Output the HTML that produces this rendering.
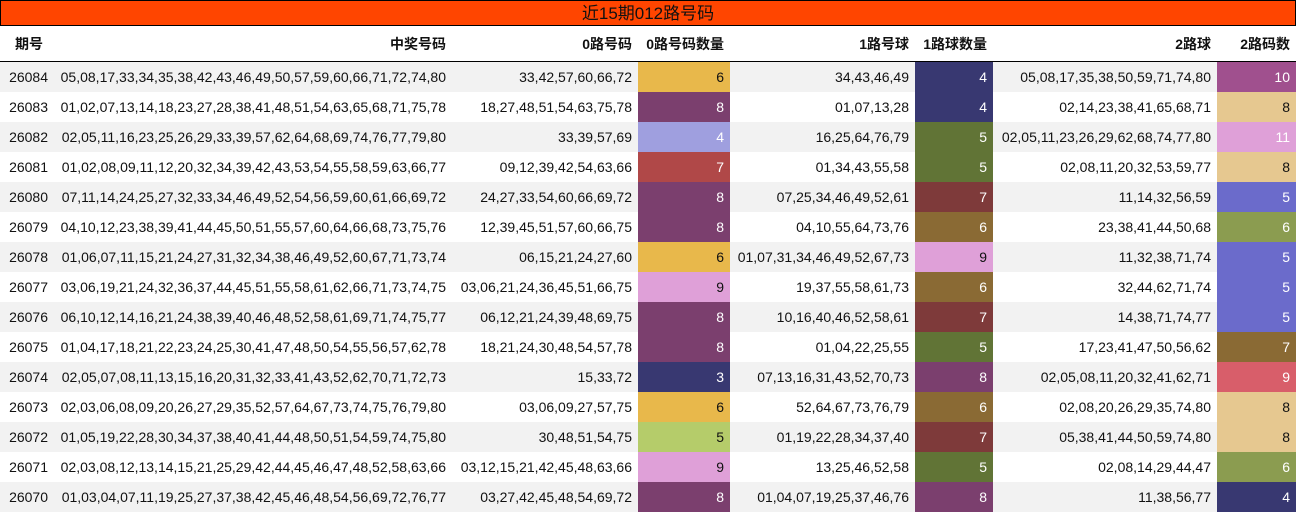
<!DOCTYPE html><html><head><meta charset="utf-8"><style>
body{margin:0;background:#fff;font-family:"Liberation Sans","Noto Sans CJK SC",sans-serif;font-size:14px;color:#111}
.t{position:absolute;left:0;top:0;width:1294px;height:24px;background:#FF4500;border:1px solid #000;text-align:center;font-size:17px;line-height:26px;color:#111}
table{position:absolute;top:26px;left:0;border-collapse:collapse;table-layout:fixed;width:1296px}
th{height:35px;font-weight:bold;text-align:right;padding:0 6px;border-bottom:1px solid #000;white-space:nowrap}
td{height:30px;padding:0 6px;text-align:right;white-space:nowrap}
tr.o td{background:#f2f2f2}
td.c{color:#fff}td.k{color:#111}
</style></head><body>
<div class="t">近15期012路号码</div>
<table>
<colgroup><col style="width:54px"><col style="width:398px"><col style="width:186px"><col style="width:92px"><col style="width:185px"><col style="width:78px"><col style="width:224px"><col style="width:79px"></colgroup>
<tr><th style="text-align:center;padding:0 0 0 4px">期号</th><th>中奖号码</th><th>0路号码</th><th>0路号码数量</th><th>1路号球</th><th>1路球数量</th><th>2路球</th><th>2路码数</th></tr>
<tr class="o"><td>26084</td><td>05,08,17,33,34,35,38,42,43,46,49,50,57,59,60,66,71,72,74,80</td><td>33,42,57,60,66,72</td><td class="k" style="background:#E8B84B!important">6</td><td>34,43,46,49</td><td class="c" style="background:#383871!important">4</td><td>05,08,17,35,38,50,59,71,74,80</td><td class="c" style="background:#A0508E!important">10</td></tr>
<tr><td>26083</td><td>01,02,07,13,14,18,23,27,28,38,41,48,51,54,63,65,68,71,75,78</td><td>18,27,48,51,54,63,75,78</td><td class="c" style="background:#7B3F6E">8</td><td>01,07,13,28</td><td class="c" style="background:#383871">4</td><td>02,14,23,38,41,65,68,71</td><td class="k" style="background:#E6C890">8</td></tr>
<tr class="o"><td>26082</td><td>02,05,11,16,23,25,26,29,33,39,57,62,64,68,69,74,76,77,79,80</td><td>33,39,57,69</td><td class="c" style="background:#9F9FDF!important">4</td><td>16,25,64,76,79</td><td class="c" style="background:#617436!important">5</td><td>02,05,11,23,26,29,62,68,74,77,80</td><td class="c" style="background:#DFA0D8!important">11</td></tr>
<tr><td>26081</td><td>01,02,08,09,11,12,20,32,34,39,42,43,53,54,55,58,59,63,66,77</td><td>09,12,39,42,54,63,66</td><td class="c" style="background:#B04848">7</td><td>01,34,43,55,58</td><td class="c" style="background:#617436">5</td><td>02,08,11,20,32,53,59,77</td><td class="k" style="background:#E6C890">8</td></tr>
<tr class="o"><td>26080</td><td>07,11,14,24,25,27,32,33,34,46,49,52,54,56,59,60,61,66,69,72</td><td>24,27,33,54,60,66,69,72</td><td class="c" style="background:#7B3F6E!important">8</td><td>07,25,34,46,49,52,61</td><td class="c" style="background:#7E3A3A!important">7</td><td>11,14,32,56,59</td><td class="c" style="background:#6B6BCB!important">5</td></tr>
<tr><td>26079</td><td>04,10,12,23,38,39,41,44,45,50,51,55,57,60,64,66,68,73,75,76</td><td>12,39,45,51,57,60,66,75</td><td class="c" style="background:#7B3F6E">8</td><td>04,10,55,64,73,76</td><td class="c" style="background:#8A6A34">6</td><td>23,38,41,44,50,68</td><td class="c" style="background:#8B9C50">6</td></tr>
<tr class="o"><td>26078</td><td>01,06,07,11,15,21,24,27,31,32,34,38,46,49,52,60,67,71,73,74</td><td>06,15,21,24,27,60</td><td class="k" style="background:#E8B84B!important">6</td><td>01,07,31,34,46,49,52,67,73</td><td class="k" style="background:#DFA0D8!important">9</td><td>11,32,38,71,74</td><td class="c" style="background:#6B6BCB!important">5</td></tr>
<tr><td>26077</td><td>03,06,19,21,24,32,36,37,44,45,51,55,58,61,62,66,71,73,74,75</td><td>03,06,21,24,36,45,51,66,75</td><td class="k" style="background:#DFA0D8">9</td><td>19,37,55,58,61,73</td><td class="c" style="background:#8A6A34">6</td><td>32,44,62,71,74</td><td class="c" style="background:#6B6BCB">5</td></tr>
<tr class="o"><td>26076</td><td>06,10,12,14,16,21,24,38,39,40,46,48,52,58,61,69,71,74,75,77</td><td>06,12,21,24,39,48,69,75</td><td class="c" style="background:#7B3F6E!important">8</td><td>10,16,40,46,52,58,61</td><td class="c" style="background:#7E3A3A!important">7</td><td>14,38,71,74,77</td><td class="c" style="background:#6B6BCB!important">5</td></tr>
<tr><td>26075</td><td>01,04,17,18,21,22,23,24,25,30,41,47,48,50,54,55,56,57,62,78</td><td>18,21,24,30,48,54,57,78</td><td class="c" style="background:#7B3F6E">8</td><td>01,04,22,25,55</td><td class="c" style="background:#617436">5</td><td>17,23,41,47,50,56,62</td><td class="c" style="background:#8A6A34">7</td></tr>
<tr class="o"><td>26074</td><td>02,05,07,08,11,13,15,16,20,31,32,33,41,43,52,62,70,71,72,73</td><td>15,33,72</td><td class="c" style="background:#383871!important">3</td><td>07,13,16,31,43,52,70,73</td><td class="c" style="background:#7B3F6E!important">8</td><td>02,05,08,11,20,32,41,62,71</td><td class="c" style="background:#D85E6A!important">9</td></tr>
<tr><td>26073</td><td>02,03,06,08,09,20,26,27,29,35,52,57,64,67,73,74,75,76,79,80</td><td>03,06,09,27,57,75</td><td class="k" style="background:#E8B84B">6</td><td>52,64,67,73,76,79</td><td class="c" style="background:#8A6A34">6</td><td>02,08,20,26,29,35,74,80</td><td class="k" style="background:#E6C890">8</td></tr>
<tr class="o"><td>26072</td><td>01,05,19,22,28,30,34,37,38,40,41,44,48,50,51,54,59,74,75,80</td><td>30,48,51,54,75</td><td class="k" style="background:#B5CC6A!important">5</td><td>01,19,22,28,34,37,40</td><td class="c" style="background:#7E3A3A!important">7</td><td>05,38,41,44,50,59,74,80</td><td class="k" style="background:#E6C890!important">8</td></tr>
<tr><td>26071</td><td>02,03,08,12,13,14,15,21,25,29,42,44,45,46,47,48,52,58,63,66</td><td>03,12,15,21,42,45,48,63,66</td><td class="k" style="background:#DFA0D8">9</td><td>13,25,46,52,58</td><td class="c" style="background:#617436">5</td><td>02,08,14,29,44,47</td><td class="c" style="background:#8B9C50">6</td></tr>
<tr class="o"><td>26070</td><td>01,03,04,07,11,19,25,27,37,38,42,45,46,48,54,56,69,72,76,77</td><td>03,27,42,45,48,54,69,72</td><td class="c" style="background:#7B3F6E!important">8</td><td>01,04,07,19,25,37,46,76</td><td class="c" style="background:#7B3F6E!important">8</td><td>11,38,56,77</td><td class="c" style="background:#383871!important">4</td></tr>
</table>
</body></html>
